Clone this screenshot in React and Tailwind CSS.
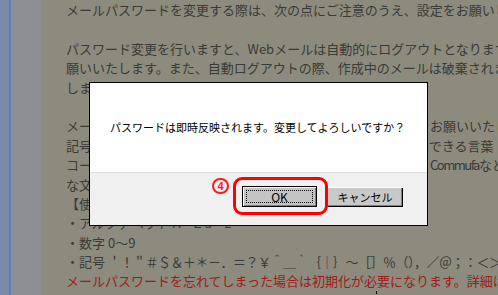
export default function App() {
  const lines = [
    { t: "メールパスワードを変更する際は、次の点にご注意のうえ、設定をお願いします。" },
    { t: "" },
    { t: "パスワード変更を行いますと、Webメールは自動的にログアウトとなりますので、再度ログインをお" },
    { t: "願いいたします。また、自動ログアウトの際、作成中のメールは破棄されますので、保存をお願いいた" },
    { t: "しますのでご注意ください。" },
    { t: "" },
    { t: "メールパスワードは、半角英数字と記号を組み合わせて設定をお願いいたします。" },
    { t: "記号は以下のものがご利用いただけます。第三者が容易に推測できる言葉（誕生日など）" },
    { commufa: true },
    { t: "な文字列は避けてください。" },
    { t: "【使用可能な文字】" },
    { t: "・アルファベット A～Z a～z" },
    { t: "・数字 0～9" },
    { sym: true },
    { t: "メールパスワードを忘れてしまった場合は初期化が必要になります。詳細はこちら", red: true },
  ];
  return (
    <div className="relative w-[498px] h-[295px] overflow-hidden flex bg-[#8c8b7d] font-['Noto_Sans_CJK_JP',sans-serif]">
      <div className="w-[9px] h-full bg-[#7b8aa8]" />
      <div className="w-[2px] h-full bg-[#5f7cb8]" />
      <div className="w-[30px] h-full bg-[#8e8e96]" />
      <div className="flex-1 min-w-0 pl-[25px] overflow-hidden text-[13px] leading-[19.4px] text-[#3a3a36]">
        {lines.map((l, i) => {
          if (l.sym) {
            return (
              <div key={i} className="whitespace-nowrap h-[19.4px]">
                ・記号 <span className="tracking-[-0.5px]">＇！＂＃＄＆＋＊－．＝？￥＾＿｀｛｜｝～［］％（），／＠；：＜＞</span>
              </div>
            );
          }
          if (l.commufa) {
            return (
              <div key={i} className="whitespace-nowrap h-[19.4px]">
                コード番号、電話番号、生年月日、利用者のメールアドレス、<span className="tracking-[-1.5px]">Commufa</span>などの推測されやすい
              </div>
            );
          }
          return (
            <div key={i} className={`whitespace-nowrap h-[19.4px] ${l.red ? "text-[#a01a1a]" : ""}`}>
              {l.t}
            </div>
          );
        })}
      </div>

      <div className="absolute left-[89px] top-[82px] w-[339px] h-[144px] border border-black bg-white flex flex-col">
        <div className="h-[89px] flex items-center pl-[20px] text-[11px] text-black">
          パスワードは即時反映されます。変更してよろしいですか？
        </div>
        <div className="flex-1 bg-[#f0f0f0] border-t border-[#dfdfdf] flex justify-end items-start pt-[13px] pr-[24px] gap-[10px]">
          <button className="relative w-[75px] h-[21px] border border-black bg-[#c4c4c4] shadow-[inset_1px_1px_0_#ffffff,inset_-1px_-1px_0_#808080] text-[12px] text-black flex items-center justify-center">
            <span className="absolute inset-[3px] border border-dotted border-black" />
            <span className="relative">OK</span>
          </button>
          <button className="w-[76px] h-[20px] mt-[1px] bg-[#c8c8c8] shadow-[inset_1px_1px_0_#ffffff,inset_-1px_-1px_0_#000000,inset_-2px_-2px_0_#808080] text-[11px] text-black flex items-center justify-center">
            キャンセル
          </button>
        </div>
      </div>

      <div className="absolute left-[233px] top-[177px] w-[95px] h-[38px] border-[3px] border-[#ff0000] rounded-[9px]" />
      <div className="absolute left-[212px] top-[178px] w-[17px] h-[16px] rounded-full border-2 border-[#ff1a1a] text-[#ff1a1a] font-bold text-[11px] leading-none flex items-center justify-center font-['Liberation_Sans',sans-serif]">
        4
      </div>
      <div className="absolute left-[376px] top-[291px] w-[1px] h-[3px] bg-black" />
    </div>
  );
}
